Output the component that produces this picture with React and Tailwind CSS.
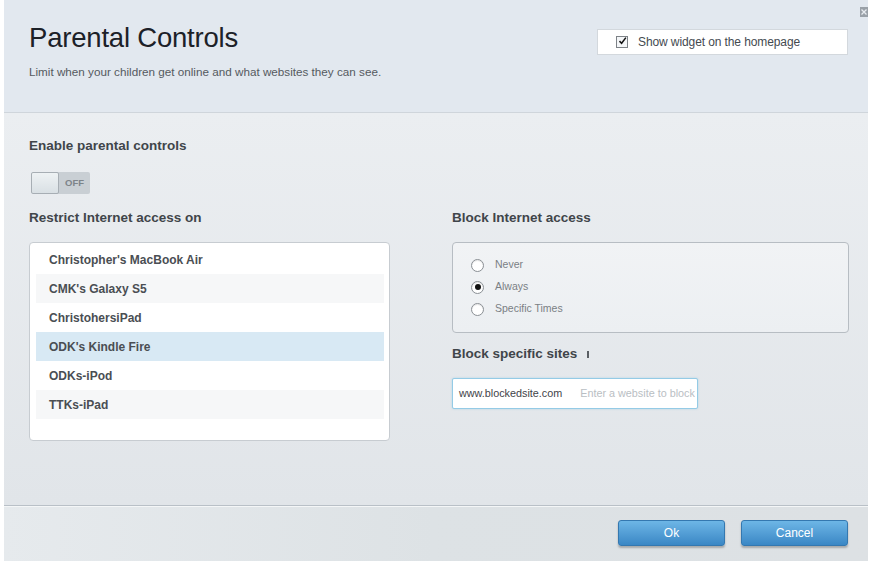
import React from "react";

const devices = [
  { name: "Christopher's MacBook Air", bg: "bg-white" },
  { name: "CMK's Galaxy S5", bg: "bg-[#f6f7f8]" },
  { name: "ChristohersiPad", bg: "bg-white" },
  { name: "ODK's Kindle Fire", bg: "bg-[#d8e9f4]" },
  { name: "ODKs-iPod", bg: "bg-white" },
  { name: "TTKs-iPad", bg: "bg-[#f6f7f8]" },
];

function Radio({ checked, label }) {
  return (
    <div className="flex items-center h-[22px]">
      <div className="w-[13px] h-[13px] rounded-full border border-[#8a8f94] bg-white flex items-center justify-center shadow-[inset_0_1px_1px_rgba(0,0,0,0.1)]">
        {checked && <div className="w-[6px] h-[6px] rounded-full bg-[#111]" />}
      </div>
      <span className="ml-[11px] text-[10.5px] text-[#7a7f84]">{label}</span>
    </div>
  );
}

export default function App() {
  return (
    <div
      className="w-[872px] h-[566px] bg-white pl-[4px] pr-[4px] pb-[5px] overflow-hidden"
      style={{ fontFamily: '"Liberation Sans", Arial, sans-serif' }}
    >
      <div className="flex flex-col h-full">
        {/* Header */}
        <div className="relative h-[113px] shrink-0 bg-[#e2e8ef] border-b border-[#cfd5db] flex justify-between pl-[25px] pr-[20px]">
          <div className="pt-[22px]">
            <h1 className="text-[27.5px] leading-[32px] text-[#1c2128] font-normal tracking-[-0.2px]">
              Parental Controls
            </h1>
            <p className="mt-[11px] text-[11.7px] leading-[14px] text-[#555a60]">
              Limit when your children get online and what websites they can see.
            </p>
          </div>
          <div className="mt-[29px] w-[251px] h-[26px] bg-white border border-[#d3d8dd] flex items-center pl-[18px]">
            <div className="w-[12px] h-[12px] border border-[#7d8287] bg-[#f4f6f8] flex items-center justify-center">
              <svg width="12" height="12" viewBox="0 0 12 12" className="-mt-[2px] ml-[1px]">
                <path d="M2 6.2 L4.8 9 L10.5 1.5" fill="none" stroke="#111" strokeWidth="2" />
              </svg>
            </div>
            <span className="ml-[10px] text-[12px] text-[#444a50] tracking-[-0.1px]">Show widget on the homepage</span>
          </div>
          <div className="absolute top-[7px] right-[0px] w-[8px] h-[10px] bg-[#9aa1a8] flex items-center justify-center overflow-hidden">
            <svg width="8" height="8" viewBox="0 0 8 8">
              <path d="M1.5 1.5 L6.5 6.5 M6.5 1.5 L1.5 6.5" stroke="#e8ecf0" strokeWidth="1.3" />
            </svg>
          </div>
        </div>

        {/* Body */}
        <div className="flex-1 bg-gradient-to-b from-[#ebeef1] to-[#e1e5e9] pl-[25px] pr-[19px] pt-[25px] border-b border-[#b9c0c7]">
          <h2 className="text-[13.5px] leading-[16px] font-bold text-[#40454a]">Enable parental controls</h2>
          <div className="mt-[18px] flex w-[59px] h-[22px] rounded-[2px] overflow-hidden bg-[#c9cfd4] ml-[2px]">
            <div className="w-[28px] h-full bg-gradient-to-b from-[#eef2f4] to-[#d9e0e4] border border-[#a7aeb4] rounded-[2px]" />
            <div className="flex-1 flex items-center justify-center text-[9.5px] font-bold text-[#7d8489]">OFF</div>
          </div>

          <div className="mt-[16px] flex gap-[62px]">
            <div className="w-[361px]">
              <h2 className="text-[13.5px] leading-[16px] font-bold text-[#40454a]">Restrict Internet access on</h2>
              <div className="mt-[16px] h-[199px] bg-white border border-[#c7ccd1] rounded-[4px] pt-[2px] pl-[6px] pr-[5px]">
                {devices.map((d) => (
                  <div key={d.name} className={`h-[29px] flex items-center pl-[13px] ${d.bg}`}>
                    <span className="text-[12px] font-bold text-[#4a4e53]">{d.name}</span>
                  </div>
                ))}
              </div>
            </div>

            <div className="w-[397px]">
              <h2 className="text-[13.5px] leading-[16px] font-bold text-[#40454a]">Block Internet access</h2>
              <div className="mt-[16px] h-[91px] border border-[#b7bdc3] rounded-[4px] pt-[11px] pl-[18px] bg-gradient-to-b from-[#f1f3f5] to-[#eceff2]">
                <Radio label="Never" />
                <Radio label="Always" checked />
                <Radio label="Specific Times" />
              </div>
              <div className="mt-[13px] flex items-center h-[16px]">
                <h2 className="text-[13.5px] leading-[16px] font-bold text-[#40454a]">Block specific sites</h2>
                <div className="ml-[10px] w-[2px] h-[7px] bg-[#5a5f64] mt-[1px]" />
              </div>
              <div className="mt-[16px] w-[246px] h-[31px] bg-white border border-[#94cbe6] rounded-[2px] flex items-center pl-[6px] overflow-hidden whitespace-nowrap shadow-[0_0_2px_rgba(120,190,230,0.5)]">
                <span className="text-[10.8px] text-[#3f4449]">www.blockedsite.com</span>
                <span className="ml-[18px] text-[10.8px] text-[#b9bec3]">Enter a website to block</span>
              </div>
            </div>
          </div>
        </div>

        {/* Footer */}
        <div className="h-[55px] shrink-0 border-t border-[#f4f6f7] bg-gradient-to-r from-[#e6eaed] via-[#dde2e5] to-[#dde1e4] flex items-start justify-end pr-[20px] pt-[13px] gap-[16px]">
          <button className="w-[107px] h-[26px] rounded-[3px] bg-gradient-to-b from-[#6db6e6] to-[#3a87c5] border border-[#3478b0] shadow-[0_2px_2px_rgba(0,0,0,0.25)] text-white text-[12px]">
            Ok
          </button>
          <button className="w-[107px] h-[26px] rounded-[3px] bg-gradient-to-b from-[#6db6e6] to-[#3a87c5] border border-[#3478b0] shadow-[0_2px_2px_rgba(0,0,0,0.25)] text-white text-[12px]">
            Cancel
          </button>
        </div>
      </div>
    </div>
  );
}
